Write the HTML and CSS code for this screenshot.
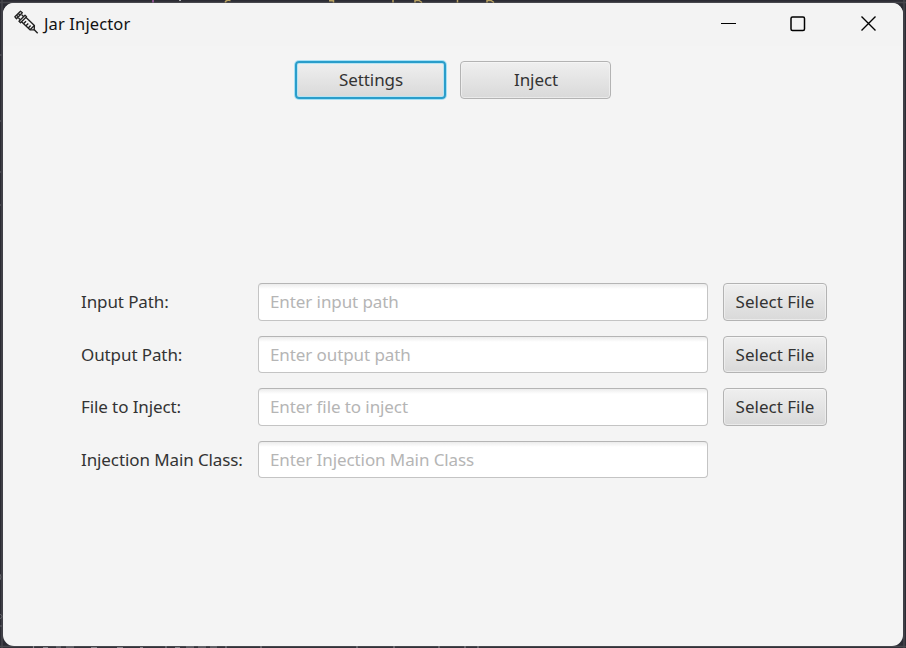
FILE: index.html
```html
<!DOCTYPE html>
<html lang="en">
<head>
<meta charset="utf-8">
<title>Jar Injector</title>
<link rel="stylesheet" href="styles.css">
</head>
<body>
<svg class="backdrop" width="906" height="648" viewBox="0 0 906 648" aria-hidden="true">
  <rect width="906" height="648" fill="#2b2b33"/>
  <path d="M2 0v648M0 2.500h906M904 0v648M0 646.500h906" stroke="#47474d" stroke-width="1.500"/>
  <path d="M153 0v2.500" stroke="#a761a8" stroke-width="1.500"/>
  <path d="M180 0v1" stroke="#a9abad" stroke-width="2"/>
  <path d="M225.500 2.500v-1q1-1.500 5-1M329 .7h4.500v1.800M393 0v2.500M415 2.500v-2h4l3 2M457.500 0v2.500M487 2.500v-2h4l3 2" fill="none" stroke="#b6a061" stroke-width="1.500"/>
  <path d="M33.500 646v2M43 647.500h5M56 647h5M66 647h8M91 647.500h6M117 647.500h6M140 647.500h3M166 646v2M175 647.500h5M186 647h8M198 647h8M210 647h7M226 646v2M261 646v2M357 646v2M394 646v2M439 646v2M465 646v2M478 646v2" stroke="#85858b" stroke-width="1.200"/>
  <path d="M0 614.500q2 0 2 2t-2 2M0 626h2M0 55h1.500M0 121h1M0 172h1M0 205h1M0 574q2 3 0 6" fill="none" stroke="#65656b"/>
</svg>
<main class="window">
  <header class="titlebar">
    <svg class="logo" width="26" height="26" viewBox="0 0 26 26" fill="none" stroke="#222" stroke-width="1.350" stroke-linejoin="round">
      <path d="M.9 6.800 6.500 1.200 8.300 2.800 2.500 8.700zM2.500 5l1.700 1.900M4.300 3.400l1.800 1.800M4.500 8l2 2M7.700 4.700l2 2M5 11.200l6-6 1.500 1.500-6 6zM7.500 11.700 16 19.800l4.200 0 .2-4.200-8.600-8.400"/>
      <path d="M9.700 13.500l2.300-2.300M12 15.700l2.300-2.300M14.300 17.900l2.300-2.300M16 19.800l4.400-4.200M19.800 19.300l3.900 4" stroke-width="1.400"/>
    </svg>
    <h1 class="title">Jar Injector</h1>
    <div class="controls">
      <svg width="16" height="16" viewBox="0 0 16 16"><path d="M0 7.500h15" stroke="#000" stroke-width="1.100"/></svg>
      <svg width="16" height="16" viewBox="0 0 16 16"><rect x="1" y="1" width="13.500" height="13.500" rx="1.500" fill="none" stroke="#000" stroke-width="1.500"/></svg>
      <svg class="close" width="16" height="16" viewBox="0 0 16 16"><path d="M.5.500l14 14M14.500.500l-14 14" stroke="#000" stroke-width="1.400"/></svg>
    </div>
  </header>
  <nav class="tabs">
    <button class="button tab focused">Settings</button>
    <button class="button tab">Inject</button>
  </nav>
  <form class="form">
    <label for="input">Input Path:</label>
    <input id="input" placeholder="Enter input path">
    <button type="button" class="button">Select File</button>
    <label for="output">Output Path:</label>
    <input id="output" placeholder="Enter output path">
    <button type="button" class="button">Select File</button>
    <label for="file">File to Inject:</label>
    <input id="file" placeholder="Enter file to inject">
    <button type="button" class="button">Select File</button>
    <label for="class">Injection Main Class:</label>
    <input id="class" placeholder="Enter Injection Main Class">
  </form>
</main>
</body>
</html>
```
FILE: styles.css
```css
* { box-sizing: border-box; }
body { margin: 0; width: 906px; height: 648px; overflow: hidden; padding: 3px; font-family: "Noto Sans", "Open Sans", sans-serif; }
.backdrop { position: absolute; inset: 0; z-index: -1; }
.window { width: 900px; height: 643px; border-radius: 11px; background: #f4f4f4; overflow: hidden; }
.titlebar { height: 43px; background: #f3f3f3; display: flex; align-items: center; padding: 0 26px 2px 11px; }
.logo { flex: none; margin-top: -2px; }
.title { margin: 0 0 0 4px; font-size: 16.5px; font-weight: 400; line-height: 22px; letter-spacing: 0.120px; color: #111; white-space: nowrap; }
.controls { margin-left: auto; display: flex; gap: 53px; }
.close { margin-left: 2px; }
.tabs { display: flex; justify-content: center; gap: 14px; margin-top: 15px; }
.button { height: 37.500px; padding: 1px 0 0; border: 1px solid #b3b3b3; border-radius: 4px; background: linear-gradient(#efefef, #d9d9d9); box-shadow: inset 0 0 0 1px #f3f3f3aa, inset 0 1px #fafafa; font: 17px/24px "Noto Sans", "Open Sans", sans-serif; color: #333; white-space: nowrap; }
.tab { width: 151px; padding-left: 1px; letter-spacing: -0.080px; }
.focused { border: 2px solid #2a9dca; box-shadow: 0 0 0 1px #a6e1f6, inset 0 0 0 1px #b7e4f3; outline: none; }
.form { display: grid; grid-template-columns: 162px 450px 104px; column-gap: 15px; row-gap: 15px; grid-auto-rows: 37.500px; align-items: center; margin: 184.500px 0 0 78px; }
label { padding-top: 1px; font-size: 17px; line-height: 24px; letter-spacing: -0.100px; color: #333; white-space: nowrap; }
input { width: 450px; height: 37.500px; padding: 0 11px; border: 1px solid #c4c4c4; border-top-color: #b5b5b5; border-radius: 4px; background: linear-gradient(#ececec, #fff 5px); font: 17px/24px "Noto Sans", "Open Sans", sans-serif; letter-spacing: -0.090px; outline: none; }
input::placeholder { color: #b5b5b5; opacity: 1; }
```
